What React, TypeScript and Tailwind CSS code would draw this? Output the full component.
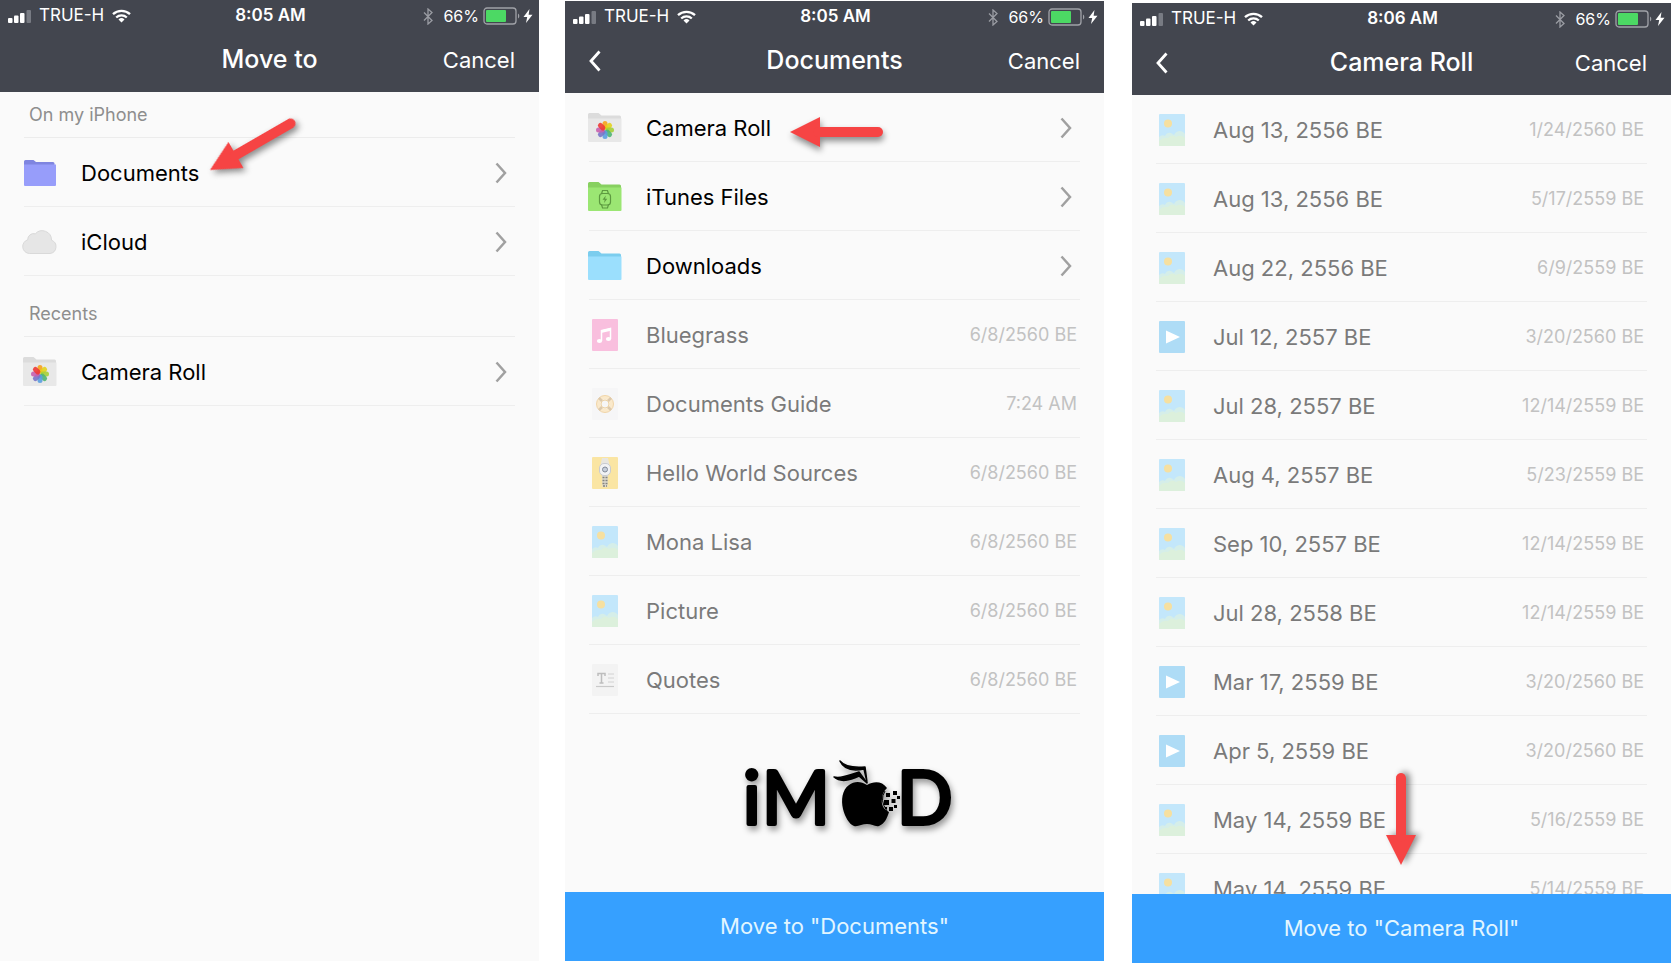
import React from "react"

type IconName = "folder" | "cloud" | "photos" | "itunes" | "downloads" | "music" | "guide" | "watch" | "image" | "video" | "text"

interface Entry {
  icon: IconName
  name: string
  date?: string
}

const documents: Entry[] = [
  { icon: "photos", name: "Camera Roll" },
  { icon: "itunes", name: "iTunes Files" },
  { icon: "downloads", name: "Downloads" },
  { icon: "music", name: "Bluegrass", date: "6/8/2560 BE" },
  { icon: "guide", name: "Documents Guide", date: "7:24 AM" },
  { icon: "watch", name: "Hello World Sources", date: "6/8/2560 BE" },
  { icon: "image", name: "Mona Lisa", date: "6/8/2560 BE" },
  { icon: "image", name: "Picture", date: "6/8/2560 BE" },
  { icon: "text", name: "Quotes", date: "6/8/2560 BE" }
]

const cameraRoll: Entry[] = [
  { icon: "image", name: "Aug 13, 2556 BE", date: "1/24/2560 BE" },
  { icon: "image", name: "Aug 13, 2556 BE", date: "5/17/2559 BE" },
  { icon: "image", name: "Aug 22, 2556 BE", date: "6/9/2559 BE" },
  { icon: "video", name: "Jul 12, 2557 BE", date: "3/20/2560 BE" },
  { icon: "image", name: "Jul 28, 2557 BE", date: "12/14/2559 BE" },
  { icon: "image", name: "Aug 4, 2557 BE", date: "5/23/2559 BE" },
  { icon: "image", name: "Sep 10, 2557 BE", date: "12/14/2559 BE" },
  { icon: "image", name: "Jul 28, 2558 BE", date: "12/14/2559 BE" },
  { icon: "video", name: "Mar 17, 2559 BE", date: "3/20/2560 BE" },
  { icon: "video", name: "Apr 5, 2559 BE", date: "3/20/2560 BE" },
  { icon: "image", name: "May 14, 2559 BE", date: "5/16/2559 BE" },
  { icon: "image", name: "May 14, 2559 BE", date: "5/14/2559 BE" }
]

const petals = [
  { angle: 0, color: "#f7a21b" },
  { angle: 45, color: "#e3d21c" },
  { angle: 90, color: "#a5cf3a" },
  { angle: 135, color: "#4fb573" },
  { angle: 180, color: "#5a9fe0" },
  { angle: 225, color: "#7a74c8" },
  { angle: 270, color: "#c85fae" },
  { angle: 315, color: "#ee3a35" }
]

const Folder = ({ back, front, children }: { back: string; front: string; children?: React.ReactNode }) => (
  <svg className="w-9 h-9" viewBox="0 0 36 36">
    <path d="M1 8V4.500a1.500 1.500 0 0 1 1.500-1.500h9l3 2.500H32.500a1.500 1.500 0 0 1 1.500 1.500V12H1z" fill={back} />
    <path d="M1 8.500h33.500V31a1 1 0 0 1-1 1H2a1 1 0 0 1-1-1z" fill={front} />
    {children}
  </svg>
)

const Page = ({ fill, children }: { fill: string; children?: React.ReactNode }) => (
  <svg className="w-9 h-9" viewBox="0 0 36 36">
    <rect x="5" y="2" width="26" height="32" rx="1" fill={fill} />
    {children}
  </svg>
)

const EntryIcon = ({ name }: { name: IconName }) => {
  switch (name) {
    case "folder":
      return (
        <svg className="w-9 h-9" viewBox="0 0 36 36">
          <path d="M2 12V6.500a1.500 1.500 0 0 1 1.500-1.500h8l2.500 2H31a1.500 1.500 0 0 1 1.500 1.500V12z" fill="#7f85e0" />
          <path d="M2 9.500h32v20.500a1 1 0 0 1-1 1H3a1 1 0 0 1-1-1z" fill="#979dfa" />
        </svg>
      )
    case "cloud":
      return (
        <svg className="w-9 h-9" viewBox="0 0 36 36">
          <path
            d="M7.500 29.500a7 7 0 0 1-1.800-13.700 6 6 0 0 1 7.600-6 9.300 9.300 0 0 1 16.200 6.400 6.900 6.900 0 0 1-1.500 13.300z"
            fill="#e6e6e6"
            stroke="#d9d9d9"
          />
        </svg>
      )
    case "photos":
      return (
        <Folder back="#dcdcdc" front="#e8e8e8">
          {petals.map(petal => (
            <rect
              key={petal.angle}
              x="15.500"
              y="11"
              width="5"
              height="8.500"
              rx="2.500"
              fill={petal.color}
              fillOpacity="0.9"
              transform={`rotate(${petal.angle} 18 20)`}
            />
          ))}
        </Folder>
      )
    case "itunes":
      return (
        <Folder back="#87d060" front="#9be673">
          <g fill="none" stroke="#5d9a40" strokeWidth="1.200">
            <path d="M14.500 15l1-3.500h5l1 3.500M14.500 25.500l1 3.500h5l1-3.500" />
            <rect x="12.500" y="14.500" width="11" height="11.500" rx="3" />
          </g>
          <path d="M18.800 16.500l-3.300 4.300h2.200l-.7 3.200 3.300-4.300h-2.200z" fill="#5d9a40" />
        </Folder>
      )
    case "downloads":
      return <Folder back="#7bcdee" front="#9bdffd" />
    case "music":
      return (
        <Page fill="#f9bfde">
          <path d="M14.500 24V13.500l9-2V22" fill="none" stroke="#fff" strokeWidth="1.500" />
          <path d="M14 13.200l10-2.200v2.800l-10 2.200z" fill="#fff" />
          <ellipse cx="12.500" cy="24" rx="2.600" ry="2" fill="#fff" />
          <ellipse cx="21.500" cy="22" rx="2.600" ry="2" fill="#fff" />
        </Page>
      )
    case "guide":
      return (
        <Page fill="#f6f6f7">
          <circle cx="18" cy="18" r="6.500" fill="none" stroke="#fae9cb" strokeWidth="4" />
          <circle cx="18" cy="18" r="8.500" fill="none" stroke="#f1d5a8" strokeWidth="1" />
          <circle cx="18" cy="18" r="4" fill="none" stroke="#eed3a6" strokeWidth="1" />
          <path d="M12 12l3 3M24 12l-3 3M12 24l3-3M24 24l-3-3" stroke="#dcc9ae" strokeWidth="2.500" />
        </Page>
      )
    case "watch":
      return (
        <Page fill="#fae5a3">
          <path d="M15 3h6l1.500 7h-9z" fill="#e8e6df" />
          <path d="M15 20h6l-.5 12h-5z" fill="#dedbd0" />
          <path d="M15.500 22.500h5M15.500 25.500h5M15.500 28.500h5M16 31h4" stroke="#85837c" strokeWidth="1.500" strokeDasharray="2 1" />
          <rect x="12.500" y="8.500" width="11" height="12" rx="4.500" fill="#f1f2f4" stroke="#c9cbd0" />
          <circle cx="18" cy="14.500" r="2.500" fill="#c6cedb" stroke="#818a99" />
        </Page>
      )
    case "image":
      return (
        <Page fill="#c3e7fb">
          <circle cx="14" cy="11.500" r="4" fill="#f6e0a0" />
          <path d="M5 25q3-3 6-1 2-4 6-3l3 2q2-4 6-4 3 0 5 3v12H5z" fill="#d5eee9" />
          <path d="M5 29q4-4 9-3 3-4 8-1 5-3 9 1v7a1 1 0 0 1-1 1H6a1 1 0 0 1-1-1z" fill="#dcf0dc" />
        </Page>
      )
    case "video":
      return (
        <Page fill="#aedcf6">
          <path d="M12 11.500v13L26 18z" fill="#fff" />
        </Page>
      )
    case "text":
      return (
        <Page fill="#f3f3f3">
          <path d="M11 14v-2.500h7V14M14.500 11.500v9.500M12.500 21h4" fill="none" stroke="#bdbdbd" strokeWidth="1.500" />
          <path d="M21 12h6M21 16h6M21 20h6" stroke="#d2d2d2" />
          <path d="M9 24.500h18" stroke="#c9c9c9" strokeWidth="1.200" />
        </Page>
      )
  }
}

const Chevron = () => (
  <svg className="w-3 h-6" viewBox="0 0 12 24" fill="none" stroke="#a0a0a0" strokeWidth="2.500">
    <path d="M1.500 2.500L10 12l-8.500 9.500" />
  </svg>
)

const Row = ({ entry }: { entry: Entry }) => (
  <li>
    <button
      disabled={!!entry.date}
      className="flex items-center w-full h-[69px] pt-0.5 border-b border-[#eeeeee] text-left text-[22px] text-black disabled:text-[#7a7a7a]"
    >
      <span className="w-[59px] -ml-0.5 shrink-0">
        <EntryIcon name={entry.icon} />
      </span>
      <span className="flex-1 truncate">{entry.name}</span>
      {entry.date ? <span className="pr-[3px] text-lg text-[#c2c2c2]">{entry.date}</span> : <span className="pr-2"><Chevron /></span>}
    </button>
  </li>
)

const StatusBar = ({ time }: { time: string }) => (
  <div className="grid grid-cols-[1fr_auto_1fr] items-center h-8 pl-2 pr-1.5 text-[17px]">
    <div className="flex items-center gap-2">
      <svg className="w-[23px] h-[13px]" viewBox="0 0 23 13" fill="#fff">
        <rect x="0" y="8" width="4.500" height="5" rx="1" />
        <rect x="6" y="5.500" width="4.500" height="7.500" rx="1" />
        <rect x="12" y="3" width="4.500" height="10" rx="1" />
        <rect x="18.500" y="0" width="4.500" height="13" rx="1" fill="#787b83" />
      </svg>
      <span>TRUE-H</span>
      <svg className="w-[19px] h-[14px]" viewBox="0 0 19 14" fill="none" stroke="#fff" strokeWidth="2.300">
        <path d="M1 5.200a12.300 12.300 0 0 1 17 0M4.200 8.500a7.700 7.700 0 0 1 10.600 0" />
        <path d="M9.500 13.500l-3-3a4.300 4.300 0 0 1 6 0z" fill="#fff" stroke="none" />
      </svg>
    </div>
    <span className="font-semibold">{time}</span>
    <div className="flex items-center justify-end">
      <svg className="w-[10px] h-[17px] mr-2.5" viewBox="0 0 10 17" fill="none" stroke="#9a9ca3" strokeWidth="1.300">
        <path d="M1 4.500l8 8-4 3.500V1l4 3.500-8 8" />
      </svg>
      <span className="mr-1 text-base">66%</span>
      <svg className="w-[38px] h-[18px]" viewBox="0 0 38 18">
        <rect x="1" y="1" width="32" height="16" rx="3" fill="none" stroke="#a0a2a8" strokeWidth="1.300" />
        <rect x="3" y="3" width="20" height="12" rx="1" fill="#4cd964" />
        <path d="M35 6.500a3 3 0 0 1 0 5z" fill="#a0a2a8" />
      </svg>
      <svg className="w-[10px] h-[14px] ml-0.5" viewBox="0 0 10 14" fill="#fff">
        <path d="M6.500 0L.5 8h3.700L3 14l6.500-8.300H5.600z" />
      </svg>
    </div>
  </div>
)

const Header = ({ title, time, back }: { title: string; time: string; back?: boolean }) => (
  <header className="h-[92px] shrink-0 bg-[#43464f] text-white">
    <StatusBar time={time} />
    <div className="grid grid-cols-[1fr_auto_1fr] items-center h-14 px-6">
      {back ? (
        <button aria-label="Back" className="justify-self-start">
          <svg className="w-3 h-[22px]" viewBox="0 0 12 22" fill="none" stroke="#fff" strokeWidth="2.800">
            <path d="M10.500 1.500L2 11l8.500 9.500" />
          </svg>
        </button>
      ) : (
        <span />
      )}
      <h1 className="text-[25px] font-medium">{title}</h1>
      <button className="justify-self-end text-[22px]">Cancel</button>
    </div>
  </header>
)

const MoveButton = ({ target }: { target: string }) => (
  <button className="h-[69px] shrink-0 bg-[#36a0ff] text-[22px] text-[#e2f6ff]">Move to "{target}"</button>
)

const SectionTitle = ({ children }: { children: React.ReactNode }) => (
  <h2 className="px-[5px] pb-2 text-lg text-[#8e8e8e] border-b border-[#ececec]">{children}</h2>
)

// Arrow pointing left, tip at the left edge of the viewBox
const Arrow = ({ className, length }: { className: string; length: number }) => (
  <svg
    className={`absolute overflow-visible drop-shadow-[1px_4px_3px_rgba(0,0,0,0.45)] ${className}`}
    width={length}
    height="30"
    viewBox={`0 0 ${length} 30`}
  >
    <path d="M0 15L30 0v30z" fill="#f64444" />
    <path d={`M28 15H${length - 5}`} stroke="#f64444" strokeWidth="10" strokeLinecap="round" />
  </svg>
)

const Logo = () => (
  <svg
    className="absolute left-[176px] bottom-[110px] w-[230px] h-[110px] drop-shadow-[2px_4px_3px_rgba(0,0,0,0.4)]"
    viewBox="0 0 230 110"
    role="img"
    aria-label="iMOD"
  >
    <g
      className="font-[Lato,sans-serif]"
      fontSize="73"
      stroke="#000"
      strokeWidth="4"
      strokeLinejoin="round"
    >
      <text x="2" y="83">i</text>
      <text x="21" y="83">M</text>
      <text x="156" y="83">D</text>
    </g>
    <g transform="translate(2 10)">
      <path d="M124 34c-6-4-13-4-18 0-7 5-8 15-6 24 2 8 6 15 11 17 4 1 8-2 13-2s8 3 12 2c5-2 8-7 10-14-6-3-8-8-7-13 0-5 2-8 5-11-5-7-13-7-20-3z" />
      <path d="M97 10c4 5 13 7 25 6l2 15-3-13c-10 2-20 1-24-8z" stroke="#000" strokeWidth="1.500" strokeLinejoin="round" />
      <path d="M91 26c8 2 15-2 25-5l8 11-8-7c-9 4-18 7-25 1z" stroke="#000" strokeWidth="1.500" strokeLinejoin="round" />
      <path d="M143 42h4v4h-4zM150 40h4v4h-4zM141 49h5v5h-5zM148.500 48h4v4h-4zM154 45h3v3h-3zM146 56h4v4h-4zM151 54h3v3h-3zM142 56h2v2h-2z" />
      <path d="M142 40q-6 9 2 20" fill="none" stroke="#000" />
    </g>
  </svg>
)

const App = () => {
  return (
    <main className="flex h-screen min-h-[600px] bg-white font-[Inter,sans-serif]">
      <section className="relative flex-1 min-w-0 flex flex-col mb-0.5 bg-[#fafafa]">
        <Header title="Move to" time="8:05 AM" />
        <div className="flex-1 overflow-hidden px-6">
          <div className="pt-[9px]">
            <SectionTitle>On my iPhone</SectionTitle>
          </div>
          <ul>
            <Row entry={{ icon: "folder", name: "Documents" }} />
            <Row entry={{ icon: "cloud", name: "iCloud" }} />
          </ul>
          <div className="pt-6">
            <SectionTitle>Recents</SectionTitle>
          </div>
          <ul>
            <Row entry={{ icon: "photos", name: "Camera Roll" }} />
          </ul>
        </div>
        <Arrow className="left-[210px] top-[155px] origin-left -rotate-30" length={98} />
      </section>

      <section className="relative flex-1 min-w-0 flex flex-col mt-px mb-0.5 ml-[26px] bg-[#fafafa]">
        <Header title="Documents" time="8:05 AM" back />
        <ul className="flex-1 overflow-hidden px-6">
          {documents.map(entry => (
            <Row key={entry.name} entry={entry} />
          ))}
        </ul>
        <Logo />
        <Arrow className="left-[225px] top-[116px]" length={93} />
        <MoveButton target="Documents" />
      </section>

      <section className="relative flex-1 min-w-0 flex flex-col mt-[3px] ml-7 bg-[#fafafa]">
        <Header title="Camera Roll" time="8:06 AM" back />
        <ul className="flex-1 overflow-hidden px-6">
          {cameraRoll.map((entry, index) => (
            <Row key={index} entry={entry} />
          ))}
        </ul>
        <Arrow className="left-[269px] bottom-[83px] origin-left -rotate-90" length={92} />
        <MoveButton target="Camera Roll" />
      </section>
    </main>
  )
}

export default App
